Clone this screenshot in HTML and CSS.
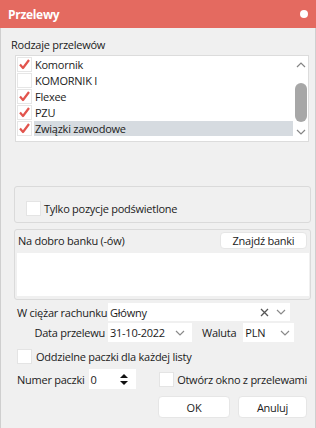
FILE: index.html
```html
<!DOCTYPE html>
<html lang="pl">
<head>
    <meta charset="UTF-8">
    <meta name="viewport" content="width=device-width, initial-scale=1.0">
    <title>Przelewy</title>
    <link rel="stylesheet" href="styles.css">
</head>
<body>
    <div class="window">
        <div class="titlebar">
            <span class="title">Przelewy</span>
            <span class="dot"></span>
        </div>

        <div class="content">
            <div class="section-label">Rodzaje przelewów</div>

            <div class="listbox">
                <div class="rows">
                    <div class="row">
                        <span class="cell"><svg width="13" height="13" viewBox="0 0 13 13"><path d="M2 6.5 L5 10 L11 2" /></svg></span>
                        <span class="name">Komornik</span>
                    </div>
                    <div class="row">
                        <span class="cell"></span>
                        <span class="name">KOMORNIK I</span>
                    </div>
                    <div class="row">
                        <span class="cell"><svg width="13" height="13" viewBox="0 0 13 13"><path d="M2 6.5 L5 10 L11 2" /></svg></span>
                        <span class="name">Flexee</span>
                    </div>
                    <div class="row">
                        <span class="cell"><svg width="13" height="13" viewBox="0 0 13 13"><path d="M2 6.5 L5 10 L11 2" /></svg></span>
                        <span class="name">PZU</span>
                    </div>
                    <div class="row">
                        <span class="cell"><svg width="13" height="13" viewBox="0 0 13 13"><path d="M2 6.5 L5 10 L11 2" /></svg></span>
                        <span class="name selected">Związki zawodowe</span>
                    </div>
                </div>
                <div class="scrollbar">
                    <svg class="arrow-up" width="10" height="6" viewBox="0 0 10 6"><path d="M1 5 L5 1 L9 5" /></svg>
                    <div class="thumb"></div>
                    <svg class="arrow-down" width="10" height="6" viewBox="0 0 10 6"><path d="M1 1 L5 5 L9 1" /></svg>
                </div>
            </div>

            <div class="group only-lit">
                <label class="checkbox"><span class="box"></span>Tylko pozycje podświetlone</label>
            </div>

            <div class="group banks">
                <div class="banks-head">
                    <span>Na dobro banku (-ów)</span>
                    <button class="btn find">Znajdź banki</button>
                </div>
                <div class="banks-list"></div>
            </div>

            <div class="form">
                <span class="form-label">W ciężar rachunku</span>
                <div class="field account">
                    <span class="value">Główny</span>
                    <svg class="clear" width="9" height="9" viewBox="0 0 9 9"><path d="M1 1 L8 8 M8 1 L1 8" /></svg>
                    <svg class="chevron" width="10" height="6" viewBox="0 0 10 6"><path d="M1 1 L5 5 L9 1" /></svg>
                </div>

                <span class="form-label">Data przelewu</span>
                <div class="form-line">
                    <div class="field date">
                        <span class="value">31-10-2022</span>
                        <svg class="chevron" width="10" height="6" viewBox="0 0 10 6"><path d="M1 1 L5 5 L9 1" /></svg>
                    </div>
                    <span class="currency-label">Waluta</span>
                    <div class="field currency">
                        <span class="value">PLN</span>
                        <svg class="chevron" width="10" height="6" viewBox="0 0 10 6"><path d="M1 1 L5 5 L9 1" /></svg>
                    </div>
                </div>
            </div>

            <label class="checkbox separate"><span class="box"></span>Oddzielne paczki dla każdej listy</label>

            <div class="packet-line">
                <span>Numer paczki</span>
                <div class="field spin">
                    <span class="value">0</span>
                    <svg class="spin-arrows" width="8" height="13" viewBox="0 0 8 13"><path d="M0 5 L4 1 L8 5 Z M0 8 L8 8 L4 12 Z" /></svg>
                </div>
                <label class="checkbox open-window"><span class="box"></span>Otwórz okno z przelewami</label>
            </div>

            <div class="actions">
                <button class="btn ok">OK</button>
                <button class="btn cancel">Anuluj</button>
            </div>
        </div>
    </div>
</body>
</html>
```

FILE: styles.css
```css
body {
    margin: 0;
    font-family: "Open Sans", "Noto Sans", sans-serif;
    font-size: 11px;
    letter-spacing: -0.25px;
    white-space: nowrap;
    color: #1b1b1b;
    background: #f0f0f0;
}
.window {
    width: 316px;
    height: 428px;
    box-sizing: border-box;
    border-left: 1px solid #cfcfcf;
    border-right: 1px solid #cfcfcf;
    background: #f0f0f0;
}
.titlebar {
    height: 28px;
    margin: 0 -1px;
    background: #e46a60;
    display: flex;
    align-items: center;
    justify-content: space-between;
    padding: 0 8px 0 8px;
}
.title {
    color: #fff;
    font-weight: 700;
    font-size: 12px;
    letter-spacing: -0.3px;
}
.dot {
    width: 8px;
    height: 8px;
    border-radius: 50%;
    background: #fff;
}
.content {
    padding: 10px 8px 0 10px;
}
.section-label {
    line-height: 14px;
}
.listbox {
    width: 294px;
    height: 87px;
    box-sizing: border-box;
    margin: 3px 0 0 4px;
    padding: 1px 1px 0 1px;
    border: 1px solid #dcdcdc;
    background: #fff;
    display: flex;
    gap: 2px;
}
.rows {
    width: 276px;
}
.row {
    display: flex;
    height: 15px;
    margin-bottom: 1px;
    line-height: 15px;
}
.cell {
    width: 15px;
    height: 15px;
    box-sizing: border-box;
    border: 1px solid #e6e6e6;
    margin-right: 2px;
    display: flex;
    align-items: center;
    justify-content: center;
}
.cell path {
    fill: none;
    stroke: #e2544d;
    stroke-width: 2.2;
    stroke-linejoin: round;
}
.name {
    flex: 1;
    padding-left: 1px;
}
.name.selected {
    background: #d6dbe0;
}
.scrollbar {
    width: 12px;
    display: flex;
    flex-direction: column;
    align-items: center;
}
.scrollbar path {
    fill: none;
    stroke: #858585;
    stroke-width: 1.2;
}
.arrow-up {
    margin-top: 5px;
}
.thumb {
    width: 12px;
    height: 39px;
    margin-top: 15px;
    border-radius: 6px;
    background: #a7a7a7;
}
.arrow-down {
    margin-top: 7px;
}
.group {
    width: 297px;
    box-sizing: border-box;
    margin-left: 3px;
    border: 1px solid #dadada;
    border-radius: 3px;
}
.only-lit {
    height: 37px;
    margin-top: 44px;
    padding: 14px 0 0 11px;
}
.checkbox {
    display: flex;
    align-items: center;
    gap: 3px;
    line-height: 15px;
}
.box {
    width: 15px;
    height: 15px;
    box-sizing: border-box;
    background: #fff;
    border: 1px solid #e4e4e4;
}
.banks {
    height: 71px;
    margin-top: 6px;
    padding: 2px 0 0 2px;
}
.banks-head {
    display: flex;
    justify-content: space-between;
    align-items: center;
    padding-left: 1px;
    margin-right: 3px;
}
.btn {
    font-family: inherit;
    font-size: 11px;
    letter-spacing: -0.25px;
    color: #1b1b1b;
    background: #fff;
    border: 1px solid #e6e6e6;
    border-radius: 4px;
    padding: 0;
}
.find {
    width: 87px;
    height: 17px;
}
.banks-list {
    width: 292px;
    height: 43px;
    margin-top: 4px;
    background: #fff;
}
.form {
    display: grid;
    grid-template-columns: 88px auto;
    column-gap: 3px;
    row-gap: 2px;
    margin: 3px 0 0 6px;
    align-items: center;
}
.form-label {
    text-align: right;
}
.field {
    height: 18px;
    box-sizing: border-box;
    background: #fff;
    display: flex;
    align-items: center;
    padding: 0 4px 0 2px;
}
.field .value {
    flex: 1;
}
.field path {
    fill: none;
    stroke: #8a8a8a;
    stroke-width: 1.2;
}
.field .clear path {
    stroke: #555;
    stroke-width: 1.3;
}
.clear {
    margin-right: 7px;
}
.account {
    width: 182px;
}
.form-line {
    display: flex;
    align-items: center;
}
.date {
    width: 84px;
    height: 19px;
    padding-right: 7px;
}
.currency-label {
    margin: 0 7px 0 10px;
}
.currency {
    width: 51px;
    height: 19px;
}
.separate {
    margin: 7px 0 0 6px;
    gap: 4px;
}
.packet-line {
    display: flex;
    align-items: center;
    margin: 5px 0 0 6px;
}
.spin {
    width: 48px;
    height: 20px;
    margin-left: 4px;
    padding-right: 8px;
}
.spin .spin-arrows path {
    fill: #111;
    stroke: none;
}
.open-window {
    margin-left: 23px;
    gap: 3px;
}
.actions {
    display: flex;
    justify-content: flex-end;
    gap: 8px;
    margin-top: 7px;
}
.ok {
    width: 72px;
    height: 22px;
}
.cancel {
    width: 69px;
    height: 22px;
}
```
